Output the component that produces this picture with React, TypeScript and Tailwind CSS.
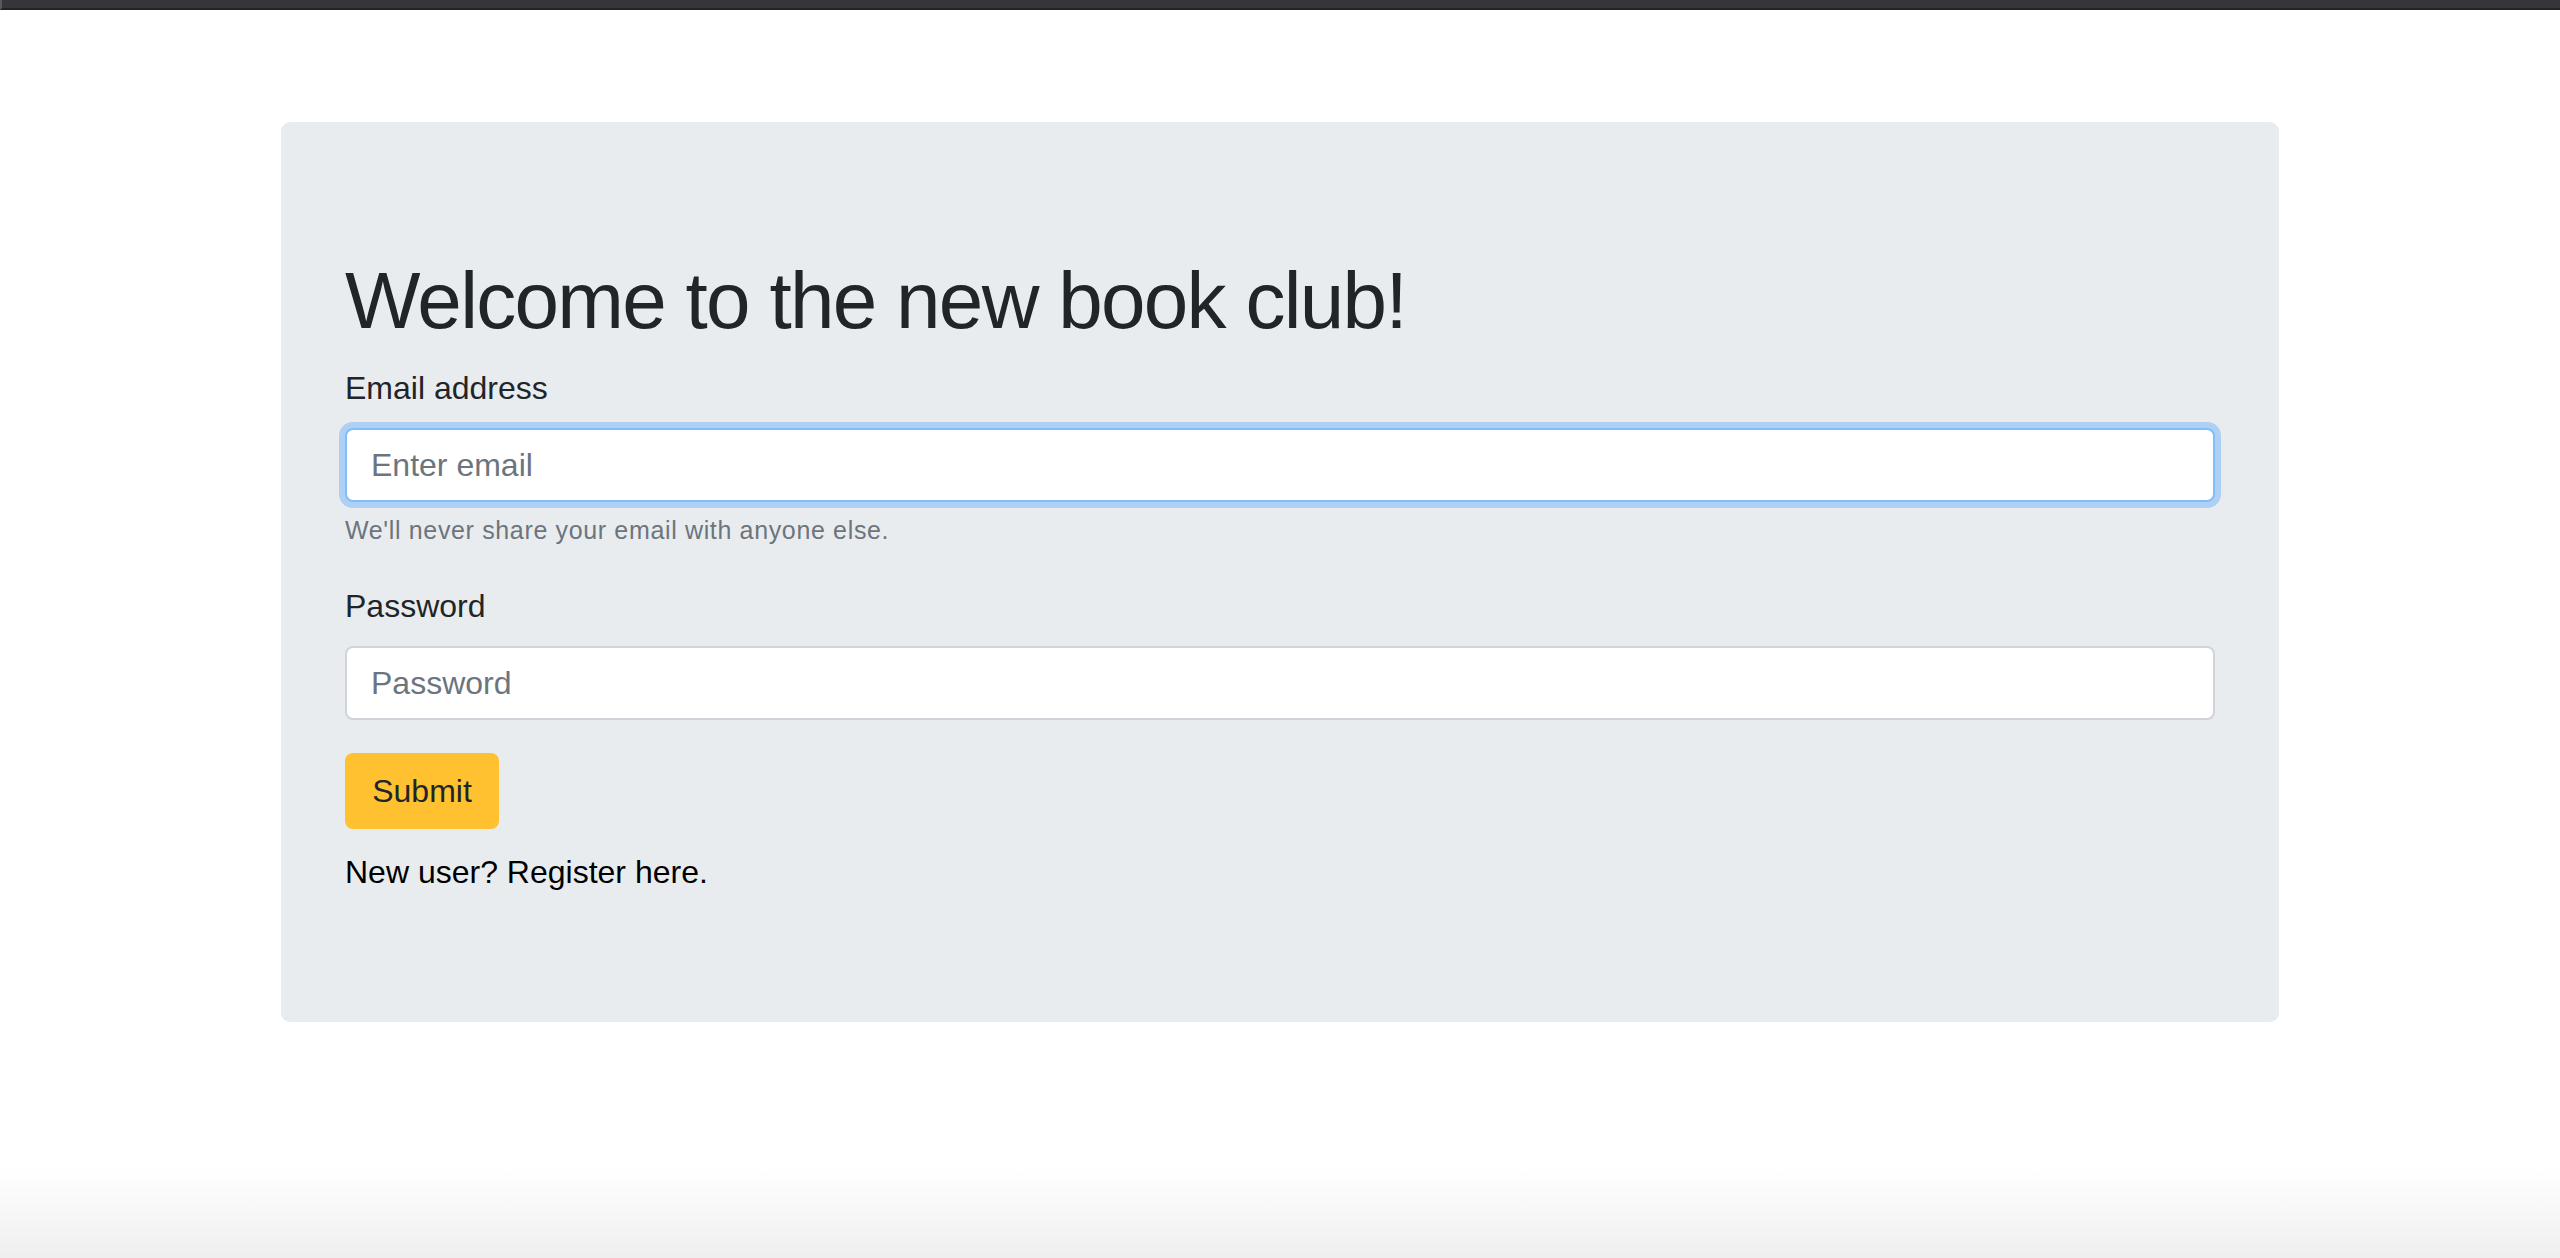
import { useState } from "react";

const Login = () => {
  const [email, setEmail] = useState("");
  const [password, setPassword] = useState("");

  return (
    <div className="mx-auto w-[1998px] rounded-[9px] bg-[#e9ecef] px-[64px] pt-[131px] pb-[126px]">
      <h1 className="text-[80px] leading-[96px] font-normal tracking-[-1.7px] text-[#212529] mb-[15px]">
        Welcome to the new book club!
      </h1>

      <form onSubmit={(e) => e.preventDefault()}>
        {/* email */}
        <div className="mb-[34px]">
          <label htmlFor="email" className="block text-[32px] leading-[48px] text-[#212529] mb-[16px]">
            Email address
          </label>
          <input
            id="email"
            type="email"
            value={email}
            onChange={(e) => setEmail(e.target.value)}
            placeholder="Enter email"
            className="block w-full h-[74px] rounded-[8px] border-2 border-[#80bdff] bg-white px-[24px] text-[32px] text-[#495057] placeholder:text-[#6c757d] outline-none shadow-[0_0_0_6px_rgba(0,123,255,0.25)]"
          />
          <small className="block mt-[10px] text-[25px] leading-[36px] tracking-[0.65px] text-[#6c757d]">
            We'll never share your email with anyone else.
          </small>
        </div>

        {/* password */}
        <div className="mb-[33px]">
          <label htmlFor="password" className="block text-[32px] leading-[48px] text-[#212529] mb-[16px]">
            Password
          </label>
          <input
            id="password"
            type="password"
            value={password}
            onChange={(e) => setPassword(e.target.value)}
            placeholder="Password"
            className="block w-full h-[74px] rounded-[8px] border-2 border-[#ced4da] bg-white px-[24px] text-[32px] text-[#495057] placeholder:text-[#6c757d] outline-none"
          />
        </div>

        <button
          type="submit"
          className="h-[76px] w-[154px] rounded-[8px] bg-[#ffc130] text-[32px] leading-[48px] text-[#212529]"
        >
          Submit
        </button>
      </form>

      <p className="mt-[19px] text-[32px] leading-[48px] text-black">New user? Register here.</p>
    </div>
  );
};

export default function App() {
  return (
    <div className="relative min-h-[1258px] bg-white font-['Liberation_Sans',Arial,sans-serif] overflow-hidden">
      {/* top chrome strip */}
      <div className="h-[10px] bg-[#35363a] border-b-2 border-[#232323] border-l-2 border-l-[#5a5a5e]" />

      <div className="pt-[112px]">
        <Login />
      </div>

      {/* bottom fade */}
      <div className="pointer-events-none absolute bottom-0 left-0 right-0 h-[90px] bg-gradient-to-b from-white/0 to-[#efefef]" />
    </div>
  );
}
